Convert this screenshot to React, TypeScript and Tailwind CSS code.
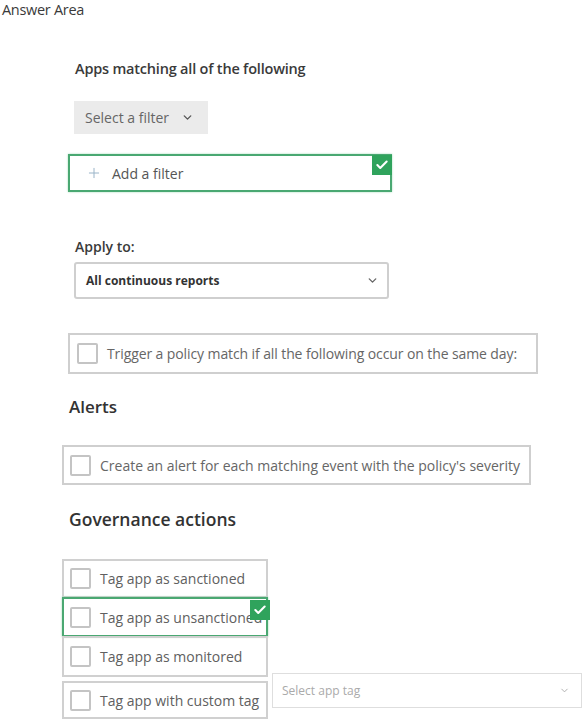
import React from 'react';
import { ChevronDown, Plus, Check } from 'lucide-react';

function GreenCheck({ className }: { className: string }) {
  return (
    <span className={`absolute flex items-center justify-center w-[20px] h-[20px] bg-[#2fa35c] ${className}`}>
      <Check size={14} strokeWidth={3.5} className="text-white" />
    </span>
  );
}

function Box() {
  return <span className="shrink-0 w-[21px] h-[21px] border-2 border-[#c4c4c4] rounded-[2px] bg-white" />;
}

function TagRow({ label, green, extraClass }: { label: string; green?: boolean; extraClass?: string }) {
  return (
    <div
      className={`relative w-[206px] flex items-center gap-[9px] pl-[6px] border-2 ${
        green ? 'border-[#4aa872] shadow-[0_0_2px_#9bd8b2]' : 'border-[#d0d0d0]'
      } ${extraClass ?? ''}`}
    >
      <Box />
      <span className="text-[14px] text-[#606060] whitespace-nowrap">{label}</span>
      {green && <GreenCheck className="-right-[4px] top-[1px]" />}
    </div>
  );
}

export default function App() {
  return (
    <div className="relative w-[587px] h-[723px] bg-white overflow-hidden font-['Open_Sans',sans-serif] text-[#333]">
      <div className="pl-[2px] text-[14.5px] leading-[20px] -tracking-[0.3px] text-[#3a3a3a]">Answer Area</div>

      <div className="pl-[75px] mt-[40px] text-[14.5px] leading-[18px] font-semibold text-[#3a3a3a] -tracking-[0.2px]">
        Apps matching all of the following
      </div>

      <div className="ml-[74px] mt-[23px] w-[134px] h-[33px] bg-[#ebebeb] flex items-center pl-[11px] gap-[12px] text-[14px] text-[#666]">
        <span>Select a filter</span>
        <ChevronDown size={13} strokeWidth={2.5} className="text-[#555]" />
      </div>

      <div className="relative ml-[68px] mt-[20px] w-[324px] h-[38px] border-2 border-[#4aa872] shadow-[0_0_2px_#a6dcbb] flex items-center pl-[16px] gap-[10px] text-[14px] text-[#555]">
        <Plus size={16} strokeWidth={1.5} className="text-[#9ab4c8]" />
        <span>Add a filter</span>
        <GreenCheck className="-right-[2px] -top-[1px]" />
      </div>

      <div className="pl-[75px] mt-[46px] text-[14px] leading-[18px] font-semibold text-[#3a3a3a]">Apply to:</div>

      <div className="ml-[74px] mt-[6px] w-[315px] h-[37px] border-2 border-[#cfcfcf] rounded-[3px] flex items-center justify-between pl-[10px] pr-[8px]">
        <span className="text-[12px] font-bold text-[#333]">All continuous reports</span>
        <ChevronDown size={13} strokeWidth={2.5} className="text-[#666]" />
      </div>

      <div className="ml-[68px] mt-[34px] w-[470px] h-[41px] border-2 border-[#cfcfcf] flex items-center pl-[7px] gap-[9px]">
        <Box />
        <span className="text-[14px] text-[#666] whitespace-nowrap -tracking-[0.1px]">
          Trigger a policy match if all the following occur on the same day:
        </span>
      </div>

      <div className="pl-[69px] mt-[21px] text-[17px] leading-[24px] font-semibold text-[#333]">Alerts</div>

      <div className="ml-[62px] mt-[26px] w-[469px] h-[40px] border-2 border-[#cfcfcf] flex items-center pl-[6px] gap-[9px]">
        <Box />
        <span className="text-[14px] text-[#666] whitespace-nowrap">
          Create an alert for each matching event with the policy's severity
        </span>
      </div>

      <div className="pl-[69px] mt-[22px] text-[17.5px] leading-[24px] font-semibold text-[#333]">Governance actions</div>

      <div className="ml-[62px] mt-[28px] flex flex-col">
        <TagRow label="Tag app as sanctioned" extraClass="h-[39px]" />
        <TagRow label="Tag app as unsanctioned" green extraClass="h-[40px] -mt-[1px]" />
        <TagRow label="Tag app as monitored" extraClass="h-[41px] -mt-[1px]" />
        <div className="flex items-start mt-[4px]">
          <TagRow label="Tag app with custom tag" extraClass="h-[38px]" />
          <div className="ml-[4px] -mt-[8px] w-[310px] h-[35px] border border-[#dedede] flex items-center justify-between pl-[9px] pr-[11px]">
            <span className="text-[12px] text-[#aaa]">Select app tag</span>
            <ChevronDown size={11} strokeWidth={2} className="text-[#aaa]" />
          </div>
        </div>
      </div>
    </div>
  );
}
